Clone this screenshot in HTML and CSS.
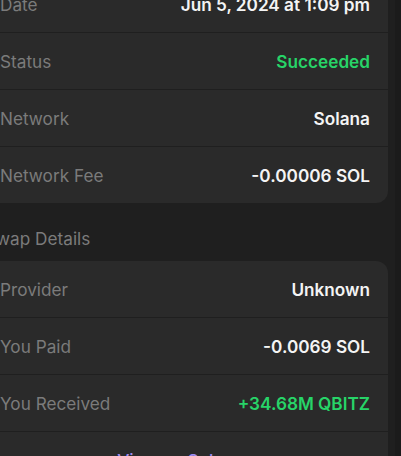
FILE: index.html
```html
<!DOCTYPE html>
<html>
<head>
<meta charset="utf-8">
<link rel="stylesheet" href="styles.css">
</head>
<body>
<div class="frame">
  <main class="content">
    <section class="card first">
      <div class="row"><span class="label">Date</span><span class="value">Jun 5, 2024 at 1:09 pm</span></div>
      <div class="row"><span class="label">Status</span><span class="value green">Succeeded</span></div>
      <div class="row"><span class="label">Network</span><span class="value">Solana</span></div>
      <div class="row"><span class="label">Network Fee</span><span class="value">-0.00006 SOL</span></div>
    </section>
    <h2 class="heading">Swap Details</h2>
    <section class="card">
      <div class="row"><span class="label">Provider</span><span class="value">Unknown</span></div>
      <div class="row"><span class="label">You Paid</span><span class="value">-0.0069 SOL</span></div>
      <div class="row"><span class="label">You Received</span><span class="value green">+34.68M QBITZ</span></div>
      <div class="row link-row"><span class="link">View on Solscan</span></div>
    </section>
  </main>
  <div class="scroll-track"></div>
</div>
</body>
</html>
```
FILE: styles.css
```css
html, body {
  margin: 0;
  padding: 0;
  height: 100%;
  overflow: hidden;
  background: #1f1f1f;
}
body {
  font-family: Inter, "Noto Sans", sans-serif;
  font-size: 17.2px;
  -webkit-font-smoothing: antialiased;
}
.frame {
  display: flex;
  height: 100%;
}
.content {
  flex: 1;
  margin-left: -18px;
  margin-right: 7px;
  margin-top: -24px;
}
.scroll-track {
  width: 6px;
  background: #1b1b1b;
}
.card {
  background: #2a2a2a;
  border-radius: 12px;
}
.row {
  height: 56px;
  padding: 0 18px;
  display: flex;
  align-items: center;
  justify-content: space-between;
}
.row + .row {
  border-top: 1px solid #1f1f1f;
}
.label {
  color: #7b7b7b;
  font-weight: 400;
}
.value {
  color: #f4f4f4;
  font-weight: 600;
}
.green {
  color: #27d468;
}
.heading {
  margin: 25px 0 11px 3px;
  font-size: 17.2px;
  line-height: 22px;
  font-weight: 400;
  color: #7b7b7b;
}
.link-row {
  justify-content: center;
}
.link {
  color: #9d8cf0;
  font-weight: 500;
}
```
